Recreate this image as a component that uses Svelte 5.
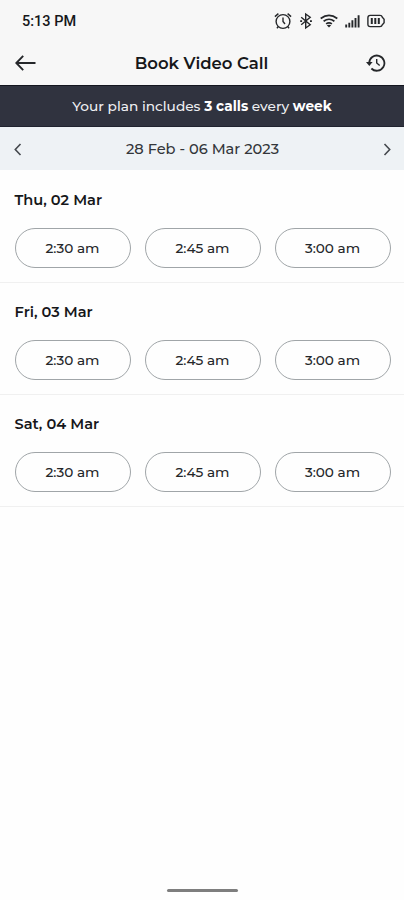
<script lang="ts">
	type Day = { label: string; slots: string[] };

	const slots = ['2:30 am', '2:45 am', '3:00 am'];
	const days: Day[] = [
		{ label: 'Thu, 02 Mar', slots },
		{ label: 'Fri, 03 Mar', slots },
		{ label: 'Sat, 04 Mar', slots }
	];
</script>

<div class="screen">
	<header>
		<div class="status-bar">
			<span class="clock">5:13 PM</span>
			<div class="status-icons">
				<!-- alarm -->
				<svg width="18" height="18" viewBox="0 0 18 18">
					<circle cx="9" cy="9.5" r="6.9" />
					<path d="M9 5.5v4l2 2.5M.9 4.6 4.4 1.6M17.1 4.6l-3.5-3M4.4 14.6l-1.5 1.6M13.6 14.6l1.5 1.6" />
				</svg>
				<!-- bluetooth -->
				<svg width="14" height="18" viewBox="0 0 14 18">
					<path d="M2.2 5.2 11.2 12.8 6.7 16V2l4.5 3.2-9 7.6" />
					<path class="solid" d="M1.2 8.2h1.9v1.7H1.2ZM11 8.2h1.9v1.7H11Z" />
				</svg>
				<!-- wifi -->
				<svg width="18" height="18" viewBox="0 0 18 18">
					<path class="waves" d="M.7 6.5Q9 .2 17.3 6.5M3.6 9.3Q9 5.2 14.4 9.3M6.1 11.9Q9 9.8 11.9 11.9" />
					<path class="solid" d="m6.8 13.3 2.2 2.2 2.2-2.2Q9 12 6.8 13.3Z" />
				</svg>
				<!-- signal -->
				<svg width="15" height="18" viewBox="0 0 15 18">
					<path class="bars" d="M1.2 15.5v-3M4.3 15.5v-4.7M7.4 15.5V8.3M10.5 15.5V6M13.6 15.5V3.2" />
				</svg>
				<!-- battery -->
				<svg width="18" height="18" viewBox="0 0 18 18">
					<path d="M3.2 3.4H13q1.8 0 2.3 1.8l1.8 2v3.6l-1.8 2q-.5 1.8-2.3 1.8H3.2Q.9 14.6.9 12.3V5.7Q.9 3.4 3.2 3.4Z" />
					<path class="cells" d="M4.8 6v6M8.3 6v6M11.8 6v6" />
				</svg>
			</div>
		</div>

		<div class="title-bar">
			<button class="icon-btn" aria-label="Back">
				<svg width="22" height="18" viewBox="0 0 22 18">
					<path class="arrow" d="M20.5 9h-19M8.2 1.8 1.3 9l6.9 7.2" />
				</svg>
			</button>
			<h1>Book Video Call</h1>
			<button class="icon-btn" aria-label="Call history">
				<svg width="20" height="18" viewBox="0 0 20 18">
					<path class="history" d="M3.2 9a7.6 7.6 0 1 1 2.2 5.5" />
					<path d="M10.7 5v4l3 2.5" />
					<path class="solid" d="M0 8h6.6L3.3 11.9Z" />
				</svg>
			</button>
		</div>
	</header>

	<div class="plan-banner">
		<span>Your plan includes <b>3 calls</b> every <b>week</b></span>
	</div>

	<div class="week-nav">
		<button class="icon-btn" aria-label="Previous week">
			<svg width="8" height="13" viewBox="0 0 8 13"><path class="chevron" d="M6.5 1 1.3 6.5l5.2 5.5" /></svg>
		</button>
		<span class="range">28 Feb - 06 Mar 2023</span>
		<button class="icon-btn" aria-label="Next week">
			<svg width="8" height="13" viewBox="0 0 8 13"><path class="chevron" d="m1.5 1 5.2 5.5L1.5 12" /></svg>
		</button>
	</div>

	<main>
		{#each days as day}
			<section>
				<h2>{day.label}</h2>
				<div class="slots">
					{#each day.slots as slot}
						<button class="slot">{slot}</button>
					{/each}
				</div>
			</section>
		{/each}
	</main>

	<div class="home-indicator"></div>
</div>

<style>
	:global(body) {
		margin: 0;
		background: #fff;
	}

	.screen {
		display: flex;
		flex-direction: column;
		height: 900px;
		background: #fefefe;
		color: #16171a;
		font-family: Montserrat, Inter, 'Open Sans', sans-serif;
		overflow: hidden;
	}

	.screen * {
		box-sizing: border-box;
	}

	button {
		padding: 0;
		border: 0;
		background: none;
		color: inherit;
		font: inherit;
	}

	svg {
		display: block;
		fill: none;
		stroke: #25272a;
		stroke-width: 1.4;
	}

	.solid {
		fill: #25272a;
		stroke: none;
	}

	.waves {
		stroke-width: 1.7;
	}

	.bars {
		stroke-width: 1.9;
	}

	.cells {
		stroke-width: 2;
	}

	.arrow {
		stroke-width: 1.9;
	}

	.history {
		stroke-width: 1.8;
	}

	.chevron {
		stroke: #45494e;
		stroke-width: 1.6;
	}

	header {
		height: 85px;
		background: #f7f7f7;
	}

	.status-bar {
		display: flex;
		align-items: center;
		justify-content: space-between;
		height: 42px;
		padding: 0 19px 0 22px;
	}

	.clock {
		font-family: Roboto, sans-serif;
		font-size: 14.5px;
		font-weight: 500;
	}

	.status-icons {
		display: flex;
		gap: 7px;
	}

	.title-bar {
		display: flex;
		align-items: center;
		justify-content: space-between;
		height: 42px;
		padding: 0 18px 0 15px;
	}

	h1 {
		margin: 0;
		font-size: 16.5px;
		font-weight: 600;
	}

	.plan-banner {
		display: flex;
		align-items: center;
		justify-content: center;
		height: 42px;
		border-top: 1px solid #14161f;
		border-bottom: 1px solid #20232f;
		background: #30333f;
		color: #eeeff2;
		font-size: 13.7px;
		font-weight: 500;
		white-space: nowrap;
	}

	.plan-banner b {
		color: #fff;
		font-weight: 700;
	}

	.week-nav {
		display: flex;
		align-items: center;
		justify-content: space-between;
		height: 43px;
		padding: 1px 13px 0 14px;
		background: #eef2f5;
	}

	.range {
		color: #33363a;
		font-size: 14.6px;
		font-weight: 500;
	}

	main {
		padding-top: 1px;
	}

	section {
		height: 112px;
		padding: 19px 13.5px 0 14.5px;
		border-bottom: 1px solid #f0f0f0;
	}

	h2 {
		margin: 0;
		font-size: 14.6px;
		font-weight: 600;
		line-height: 20px;
	}

	.slots {
		display: grid;
		grid-template-columns: repeat(3, 1fr);
		gap: 14px;
		margin-top: 18px;
	}

	.slot {
		height: 40px;
		border: 1px solid #a0a5a8;
		border-radius: 20px;
		color: #25272a;
		font-size: 13.6px;
		font-weight: 500;
	}

	.home-indicator {
		width: 71px;
		height: 3px;
		margin: auto auto 8px 167px;
		border-radius: 2px;
		background: #7e7e7e;
	}
</style>
